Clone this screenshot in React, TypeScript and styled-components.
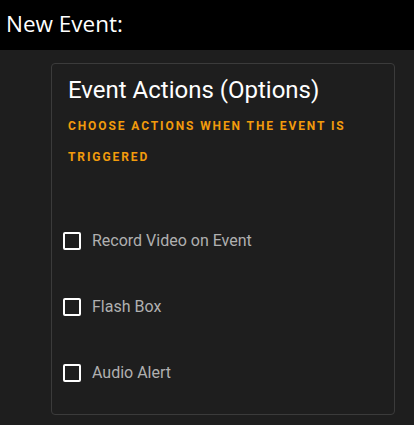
import styled, { createGlobalStyle } from "styled-components";

const GlobalStyle = createGlobalStyle`
  html, body {
    margin: 0;
    padding: 0;
    background: #1e1e1e;
  }
  body {
    font-family: Roboto, "Noto Sans", sans-serif;
  }
`;

const actions = ["Record Video on Event", "Flash Box", "Audio Alert"];

const App = () => {
  return (
    <>
      <GlobalStyle />
      <Page>
        <Header>New Event:</Header>
        <Body>
          <Card>
            <Title>Event Actions (Options)</Title>
            <Subtitle>Choose actions when the event is triggered</Subtitle>
            <List>
              {actions.map((a) => (
                <Option key={a}>
                  <Box type="checkbox" />
                  <Label>{a}</Label>
                </Option>
              ))}
            </List>
          </Card>
        </Body>
      </Page>
    </>
  );
};

export default App;

const Page = styled.div`
  width: 414px;
  min-height: 425px;
  background: #1e1e1e;
`;

const Header = styled.div`
  height: 50px;
  background: #000;
  color: #fff;
  font-family: "Open Sans", sans-serif;
  font-size: 22.5px;
  line-height: 48px;
  padding-left: 6px;
  box-sizing: border-box;
`;

const Body = styled.div`
  padding: 13px 19px 0 51px;
`;

const Card = styled.div`
  border: 1px solid #3b3b3b;
  border-radius: 4px;
  height: 352px;
  box-sizing: border-box;
  padding: 12px 16px 0 16px;
`;

const Title = styled.h2`
  margin: 0;
  color: #fff;
  font-size: 24px;
  font-weight: 400;
  line-height: 28px;
`;

const Subtitle = styled.div`
  margin-top: 7px;
  color: #f29b0c;
  text-transform: uppercase;
  font-size: 12px;
  font-weight: 700;
  letter-spacing: 1.9px;
  line-height: 31px;
`;

const List = styled.div`
  display: flex;
  flex-direction: column;
  gap: 48px;
  margin: 59px 0 0 -5px;
`;

const Option = styled.label`
  display: flex;
  align-items: center;
  gap: 11px;
  height: 18px;
`;

const Box = styled.input`
  appearance: none;
  margin: 0;
  width: 18px;
  height: 18px;
  border: 2px solid #fff;
  border-radius: 2px;
  box-sizing: border-box;
  background: transparent;
`;

const Label = styled.span`
  color: #b0b0b0;
  font-size: 16px;
  font-weight: 400;
  line-height: 18px;
`;
